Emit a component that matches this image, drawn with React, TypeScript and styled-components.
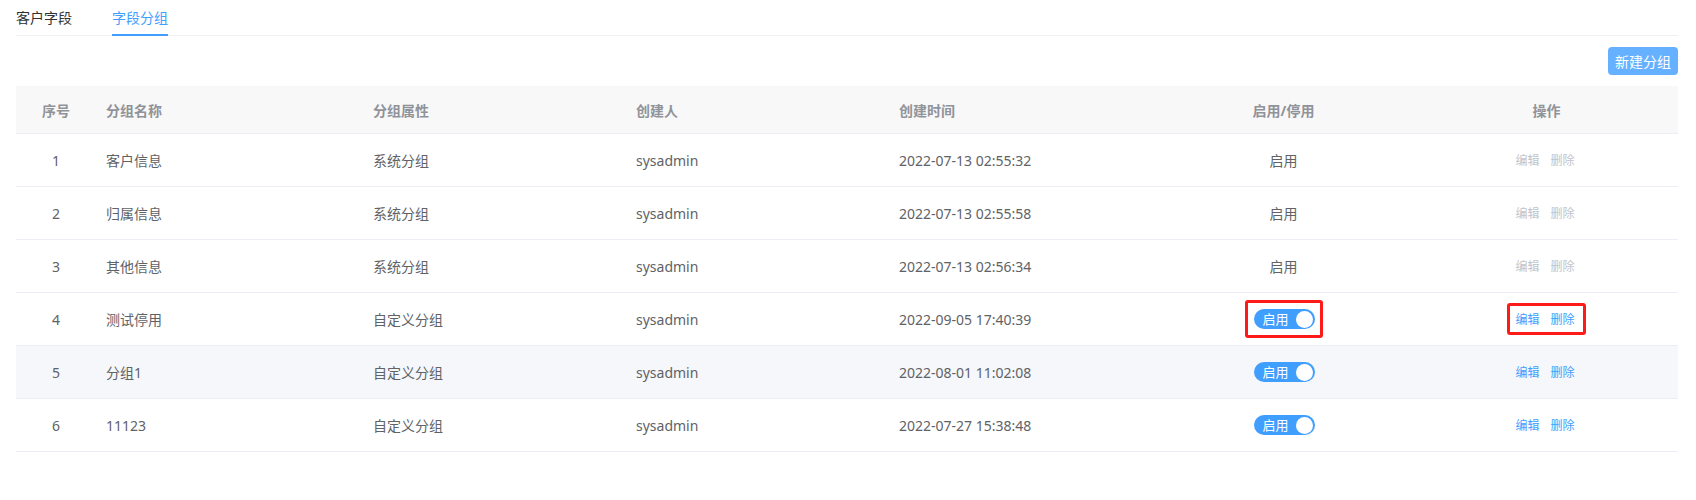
import styled, { createGlobalStyle } from "styled-components";

const GlobalStyle = createGlobalStyle`
  html, body {
    margin: 0;
    padding: 0;
    background: #fff;
    font-family: "Noto Sans", "Noto Sans CJK SC", "Liberation Sans", sans-serif;
    -webkit-font-smoothing: antialiased;
  }
`;

type Row = {
  id: number;
  name: string;
  kind: string;
  creator: string;
  time: string;
  system: boolean;
  marked?: boolean;
  hover?: boolean;
};

const rows: Row[] = [
  { id: 1, name: "客户信息", kind: "系统分组", creator: "sysadmin", time: "2022-07-13 02:55:32", system: true },
  { id: 2, name: "归属信息", kind: "系统分组", creator: "sysadmin", time: "2022-07-13 02:55:58", system: true },
  { id: 3, name: "其他信息", kind: "系统分组", creator: "sysadmin", time: "2022-07-13 02:56:34", system: true },
  { id: 4, name: "测试停用", kind: "自定义分组", creator: "sysadmin", time: "2022-09-05 17:40:39", system: false, marked: true },
  { id: 5, name: "分组1", kind: "自定义分组", creator: "sysadmin", time: "2022-08-01 11:02:08", system: false, hover: true },
  { id: 6, name: "11123", kind: "自定义分组", creator: "sysadmin", time: "2022-07-27 15:38:48", system: false },
];

export default function App() {
  return (
    <>
      <GlobalStyle />
      <Page>
        <Tabs>
          <Tab>客户字段</Tab>
          <Tab $active>字段分组</Tab>
        </Tabs>

        <Toolbar>
          <PrimaryButton>新建分组</PrimaryButton>
        </Toolbar>

        <Table>
          <HeadRow>
            <HeadCell $center>序号</HeadCell>
            <HeadCell>分组名称</HeadCell>
            <HeadCell>分组属性</HeadCell>
            <HeadCell>创建人</HeadCell>
            <HeadCell>创建时间</HeadCell>
            <HeadCell $center>启用/停用</HeadCell>
            <HeadCell $center>操作</HeadCell>
          </HeadRow>
          {rows.map((r) => (
            <BodyRow key={r.id} $hover={r.hover}>
              <Cell $center>{r.id}</Cell>
              <Cell>{r.name}</Cell>
              <Cell>{r.kind}</Cell>
              <Cell>{r.creator}</Cell>
              <Cell>{r.time}</Cell>
              <Cell $center>
                {r.system ? (
                  "启用"
                ) : (
                  <Mark $on={r.marked} $pad="6px 5px 6px 6px">
                    <Switch>
                      <SwitchLabel>启用</SwitchLabel>
                      <SwitchKnob />
                    </Switch>
                  </Mark>
                )}
              </Cell>
              <Cell $center>
                <Mark $on={r.marked} $pad="4px 8px 2px 5px">
                  <Actions>
                    <ActionLink $disabled={r.system}>编辑</ActionLink>
                    <ActionLink $disabled={r.system}>删除</ActionLink>
                  </Actions>
                </Mark>
              </Cell>
            </BodyRow>
          ))}
        </Table>
      </Page>
    </>
  );
}

const Page = styled.div`
  padding: 0 18px 0 16px;
`;

const Tabs = styled.div`
  display: flex;
  height: 35px;
  border-bottom: 1px solid #eff0f3;
`;

const Tab = styled.div<{ $active?: boolean }>`
  position: relative;
  padding: 0 20px;
  font-size: 14px;
  line-height: 35px;
  color: ${(p) => (p.$active ? "#409eff" : "#303133")};
  &:first-child {
    padding-left: 0;
  }
  &::after {
    content: "";
    display: ${(p) => (p.$active ? "block" : "none")};
    position: absolute;
    left: 20px;
    right: 20px;
    bottom: -1px;
    height: 2px;
    background: #409eff;
  }
`;

const Toolbar = styled.div`
  display: flex;
  justify-content: flex-end;
  padding: 11px 0;
`;

const PrimaryButton = styled.button`
  width: 70px;
  height: 28px;
  padding: 0;
  border: none;
  border-radius: 4px;
  background: #66b1ff;
  color: #fff;
  font-family: inherit;
  font-size: 14px;
  cursor: pointer;
`;

const Table = styled.div`
  display: flex;
  flex-direction: column;
`;

const grid = `
  display: grid;
  grid-template-columns: 80px 267px repeat(5, 1fr);
  align-items: center;
  border-bottom: 1px solid #ebeef5;
`;

const HeadRow = styled.div`
  ${grid}
  height: 47px;
  background: #f8f8f8;
`;

const BodyRow = styled.div<{ $hover?: boolean }>`
  ${grid}
  height: 52px;
  background: ${(p) => (p.$hover ? "#f5f7fa" : "#fff")};
`;

const HeadCell = styled.div<{ $center?: boolean }>`
  padding: 0 10px;
  font-size: 14px;
  font-weight: bold;
  color: #909399;
  text-align: ${(p) => (p.$center ? "center" : "left")};
  white-space: nowrap;
`;

const Cell = styled.div<{ $center?: boolean }>`
  display: flex;
  justify-content: ${(p) => (p.$center ? "center" : "flex-start")};
  align-items: center;
  padding: 0 10px;
  font-size: 14px;
  color: #606266;
  white-space: nowrap;
`;

const Mark = styled.div<{ $on?: boolean; $pad: string }>`
  display: inline-flex;
  padding: ${(p) => p.$pad};
  border: 3px solid ${(p) => (p.$on ? "#ff1a1a" : "transparent")};
  border-radius: 3px;
`;

const Switch = styled.div`
  display: flex;
  align-items: center;
  justify-content: space-between;
  width: 61px;
  height: 20px;
  box-sizing: border-box;
  padding: 0 2px 0 9px;
  border-radius: 10px;
  background: #409eff;
`;

const SwitchLabel = styled.span`
  font-size: 13px;
  line-height: 20px;
  color: #fff;
`;

const SwitchKnob = styled.span`
  width: 17px;
  height: 17px;
  border-radius: 50%;
  background: #fff;
`;

const Actions = styled.div`
  display: flex;
  gap: 11px;
`;

const ActionLink = styled.span<{ $disabled?: boolean }>`
  font-size: 12px;
  line-height: 20px;
  color: ${(p) => (p.$disabled ? "#c0c4cc" : "#409eff")};
  cursor: ${(p) => (p.$disabled ? "not-allowed" : "pointer")};
`;
